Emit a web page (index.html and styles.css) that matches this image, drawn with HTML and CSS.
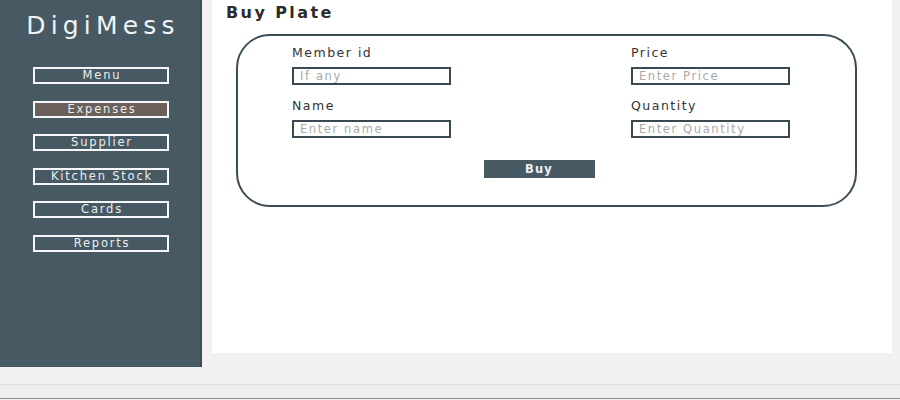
FILE: index.html
```html
<!DOCTYPE html>
<html>
<head>
<meta charset="utf-8">
<link rel="stylesheet" href="styles.css">
</head>
<body>
<div class="app">
  <aside class="sidebar">
    <div class="brand">DigiMess</div>
    <nav class="nav">
      <a class="nav-btn">Menu</a>
      <a class="nav-btn active">Expenses</a>
      <a class="nav-btn">Supplier</a>
      <a class="nav-btn">Kitchen Stock</a>
      <a class="nav-btn">Cards</a>
      <a class="nav-btn">Reports</a>
    </nav>
  </aside>
  <main class="panel">
    <h1 class="title">Buy Plate</h1>
    <form class="card">
      <div class="col">
        <label class="field">
          <span class="label">Member id</span>
          <input class="input" type="text" placeholder="If any">
        </label>
        <label class="field">
          <span class="label">Name</span>
          <input class="input" type="text" placeholder="Enter name">
        </label>
      </div>
      <div class="col">
        <label class="field">
          <span class="label">Price</span>
          <input class="input" type="text" placeholder="Enter Price">
        </label>
        <label class="field">
          <span class="label">Quantity</span>
          <input class="input" type="text" placeholder="Enter Quantity">
        </label>
      </div>
      <button class="buy" type="button">Buy</button>
    </form>
  </main>
</div>
<div class="footer"></div>
</body>
</html>
```

FILE: styles.css
```css
html, body {
  margin: 0;
  padding: 0;
}
body {
  background: #f2f1ef;
  font-family: "DejaVu Sans", "Open Sans", sans-serif;
  width: 900px;
  height: 400px;
  overflow: hidden;
}
.app {
  display: flex;
  align-items: flex-start;
  height: 367px;
}
.sidebar {
  width: 200px;
  height: 367px;
  background: #475a64;
  border-right: 2px solid #3c4c55;
  display: flex;
  flex-direction: column;
  align-items: center;
}
.brand {
  margin-top: 11px;
  height: 29px;
  line-height: 29px;
  font-size: 25px;
  letter-spacing: 5.2px;
  padding-left: 6px;
  color: #f1f3f4;
}
.nav {
  margin-top: 27px;
  display: flex;
  flex-direction: column;
  gap: 16.6px;
  padding-left: 2px;
}
.nav-btn {
  display: block;
  box-sizing: border-box;
  width: 136px;
  height: 17px;
  border: 2px solid #f4f6f7;
  background: #475a64;
  color: #e9eef0;
  font-size: 11.5px;
  line-height: 13px;
  letter-spacing: 1.8px;
  text-align: center;
  padding-left: 2px;
}
.nav-btn.active {
  background: #6c605c;
}
.panel {
  margin-left: 10px;
  width: 680px;
  height: 353px;
  background: #ffffff;
  display: flex;
  flex-direction: column;
  align-items: flex-start;
}
.title {
  margin: 3px 0 0 14px;
  font-size: 16px;
  line-height: 19px;
  font-weight: bold;
  letter-spacing: 2.4px;
  color: #2b2b2b;
}
.card {
  margin: 12px 0 0 24px;
  width: 621px;
  box-sizing: border-box;
  border: 2px solid #3d4d56;
  border-radius: 34px;
  padding: 9px 0 27px 54px;
  display: grid;
  grid-template-columns: 159px 159px;
  column-gap: 180px;
}
.col {
  display: flex;
  flex-direction: column;
  gap: 13px;
}
.field {
  display: flex;
  flex-direction: column;
}
.label {
  font-size: 12.5px;
  line-height: 15px;
  letter-spacing: 1.5px;
  color: #333333;
  margin-bottom: 7px;
}
.input {
  box-sizing: border-box;
  width: 159px;
  height: 18px;
  margin: 0;
  border: 2px solid #3a4850;
  padding: 0 0 0 6px;
  font-family: "DejaVu Sans", "Open Sans", sans-serif;
  font-size: 11.5px;
  letter-spacing: 1.6px;
  color: #333;
  background: #fff;
  outline: none;
}
.input::placeholder {
  color: #a9a9a9;
}
.buy {
  grid-column: 1 / 3;
  justify-self: center;
  margin-top: 22px;
  margin-right: 4px;
  width: 111px;
  height: 18px;
  border: none;
  padding: 0;
  background: #475a64;
  color: #eef1f2;
  font-family: "DejaVu Sans", "Open Sans", sans-serif;
  font-size: 11.5px;
  font-weight: bold;
  letter-spacing: 1.2px;
  line-height: 18px;
}
.footer {
  margin-top: 17px;
  height: 13px;
  border-top: 1px solid #dfddda;
  border-bottom: 1px solid #8a8a8a;
  background: #efeeec;
}
```
